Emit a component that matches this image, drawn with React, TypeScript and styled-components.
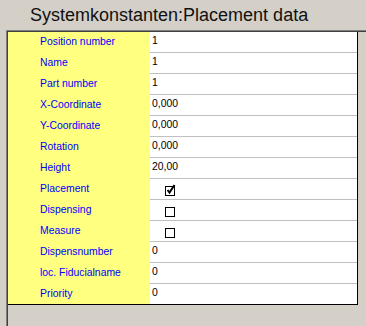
import React from "react";
import styled, { createGlobalStyle } from "styled-components";

const GlobalStyle = createGlobalStyle`
  html, body {
    margin: 0;
    padding: 0;
    background: #d4d0c8;
  }
`;

interface FieldRow {
  label: string;
  value?: string;
  checked?: boolean;
}

const rows: FieldRow[] = [
  { label: "Position number", value: "1" },
  { label: "Name", value: "1" },
  { label: "Part number", value: "1" },
  { label: "X-Coordinate", value: "0,000" },
  { label: "Y-Coordinate", value: "0,000" },
  { label: "Rotation", value: "0,000" },
  { label: "Height", value: "20,00" },
  { label: "Placement", checked: true },
  { label: "Dispensing", checked: false },
  { label: "Measure", checked: false },
  { label: "Dispensnumber", value: "0" },
  { label: "loc. Fiducialname", value: "0" },
  { label: "Priority", value: "0" },
];

const Page = styled.div`
  width: 366px;
  height: 326px;
  overflow: hidden;
  display: flex;
  flex-direction: column;
  background: #d4d0c8;
  font-family: "Liberation Sans", Arial, sans-serif;
`;

const Title = styled.div`
  height: 30px;
  line-height: 30px;
  padding-left: 30px;
  font-size: 18px;
  color: #111;
  white-space: nowrap;
`;

const Frame = styled.div`
  flex: 1;
  margin-left: 6px;
  border-top: 1px solid #808080;
  border-left: 1px solid #808080;
  display: flex;
`;

const Inner = styled.div`
  flex: 1;
  border-top: 1px solid #404040;
  border-left: 1px solid #404040;
`;

const Table = styled.div`
  width: 349px;
  border-right: 1px solid #000;
  border-bottom: 1px solid #000;
  background: #fff;
`;

const Row = styled.div<{ last?: boolean }>`
  display: grid;
  grid-template-columns: 142px 1fr;
  height: ${(p) => (p.last ? "20px" : "21px")};
`;

const Label = styled.div`
  background: #ffff80;
  color: #0000ff;
  font-size: 10.4px;
  line-height: 20px;
  padding-left: 32px;
  white-space: nowrap;
`;

const Value = styled.div<{ last?: boolean }>`
  border-bottom: ${(p) => (p.last ? "none" : "1px solid #c0c0c0")};
  color: #000;
  font-size: 10.4px;
  line-height: 18px;
  padding-left: 2px;
  display: flex;
  align-items: flex-start;
`;

const CheckCell = styled.div`
  padding-left: 13px;
  padding-top: 4px;
  display: flex;
`;

const Check: React.FC<{ checked: boolean }> = ({ checked }) => (
  <svg width="13" height="13" viewBox="0 0 13 13">
    <rect x="0.5" y="3.5" width="9" height="9" fill="#fff" stroke="#000" strokeWidth="1" />
    {checked && (
      <path d="M2.5 7 L4.5 9.5 L9.5 2" fill="none" stroke="#000" strokeWidth="2" />
    )}
  </svg>
);

const App: React.FC = () => {
  return (
    <Page>
      <GlobalStyle />
      <Title>Systemkonstanten:Placement data</Title>
      <Frame>
        <Inner>
          <Table>
            {rows.map((r, i) => {
              const last = i === rows.length - 1;
              return (
                <Row key={r.label} last={last}>
                  <Label>{r.label}</Label>
                  <Value last={last}>
                    {r.checked === undefined ? (
                      r.value
                    ) : (
                      <CheckCell>
                        <Check checked={r.checked} />
                      </CheckCell>
                    )}
                  </Value>
                </Row>
              );
            })}
          </Table>
        </Inner>
      </Frame>
    </Page>
  );
};

export default App;
